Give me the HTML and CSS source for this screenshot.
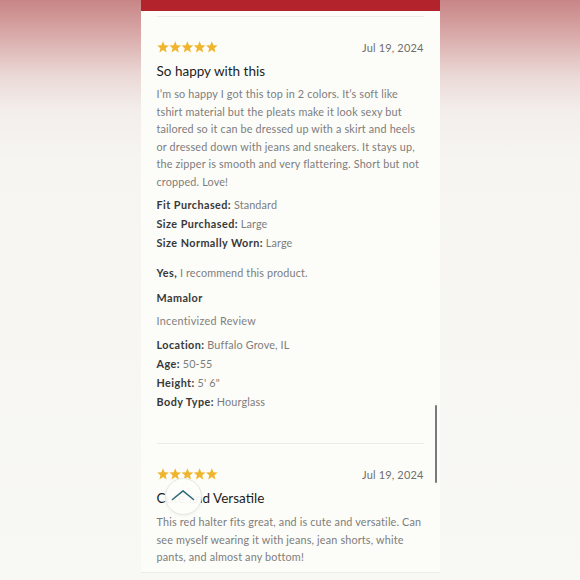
FILE: index.html
```html
<!DOCTYPE html>
<html lang="en">
<head>
<meta charset="utf-8">
<title>Reviews</title>
<link rel="stylesheet" href="styles.css">
</head>
<body>
<div class="stage">
  <div class="panel">
    <div class="topbar"></div>
    <div class="content">
      <div class="sep first"></div>

      <article class="review">
        <div class="review-head">
          <svg class="stars" width="61" height="12" viewBox="0 0 61 12" aria-label="5 stars">
            <g fill="#efb52e">
              <path id="s" d="M6 0.3 L7.6 4.2 L11.8 4.5 L8.6 7.2 L9.6 11.4 L6 9.1 L2.4 11.4 L3.4 7.2 L0.2 4.5 L4.4 4.2 Z"/>
              <use href="#s" x="12.2"/>
              <use href="#s" x="24.4"/>
              <use href="#s" x="36.6"/>
              <use href="#s" x="48.8"/>
            </g>
          </svg>
          <span class="date">Jul 19, 2024</span>
        </div>
        <h2 class="title">So happy with this</h2>
        <p class="body">I’m so happy I got this top in 2 colors. It’s soft like tshirt material but the pleats make it look sexy but tailored so it can be dressed up with a skirt and heels or dressed down with jeans and sneakers. It stays up, the zipper is smooth and very flattering. Short but not cropped. Love!</p>
        <ul class="attrs">
          <li><b>Fit Purchased:</b> <span>Standard</span></li>
          <li><b>Size Purchased:</b> <span>Large</span></li>
          <li><b>Size Normally Worn:</b> <span>Large</span></li>
        </ul>
        <p class="recommend"><b>Yes,</b> <span>I recommend this product.</span></p>
        <p class="author">Mamalor</p>
        <p class="badge">Incentivized Review</p>
        <ul class="attrs profile">
          <li><b>Location:</b> <span>Buffalo Grove, IL</span></li>
          <li><b>Age:</b> <span>50-55</span></li>
          <li><b>Height:</b> <span>5' 6"</span></li>
          <li><b>Body Type:</b> <span>Hourglass</span></li>
        </ul>
      </article>

      <div class="sep"></div>

      <article class="review">
        <div class="review-head">
          <svg class="stars" width="61" height="12" viewBox="0 0 61 12" aria-label="5 stars">
            <g fill="#efb52e">
              <path id="s2" d="M6 0.3 L7.6 4.2 L11.8 4.5 L8.6 7.2 L9.6 11.4 L6 9.1 L2.4 11.4 L3.4 7.2 L0.2 4.5 L4.4 4.2 Z"/>
              <use href="#s2" x="12.2"/>
              <use href="#s2" x="24.4"/>
              <use href="#s2" x="36.6"/>
              <use href="#s2" x="48.8"/>
            </g>
          </svg>
          <span class="date">Jul 19, 2024</span>
        </div>
        <h2 class="title">Cute and Versatile</h2>
        <p class="body">This red halter fits great, and is cute and versatile. Can see myself wearing it with jeans, jean shorts, white pants, and almost any bottom!</p>
      </article>
    </div>
    <div class="scrollbar"></div>
    <button class="totop" aria-label="Back to top">
      <svg width="24" height="12" viewBox="0 0 24 12"><path d="M1.5 10.5 L12 1.8 L22.5 10.5" fill="none" stroke="#2b6a78" stroke-width="1.5" stroke-linecap="round" stroke-linejoin="round"/></svg>
    </button>
  </div>
</div>
</body>
</html>
```

FILE: styles.css
```css
* { box-sizing: border-box; }
html, body { margin: 0; padding: 0; }
body {
  width: 580px;
  height: 580px;
  overflow: hidden;
  font-family: "Lato", "Liberation Sans", sans-serif;
  background: linear-gradient(to bottom, #c88586 0px, #d9aaa9 35px, #ead8d6 75px, #f3eeeb 110px, #f6f5f1 160px, #f8f8f4 580px);
}
.stage {
  display: flex;
  justify-content: center;
  height: 580px;
}
.panel {
  position: relative;
  width: 299px;
  height: 573px;
  background: #fcfcf8;
  border-bottom: 1px solid #ecebe6;
  overflow: hidden;
}
.topbar {
  height: 11px;
  background: #b3232c;
}
.content {
  padding: 0 16px;
}
.sep {
  height: 1px;
  background: #ecebe6;
  margin-top: 32px;
}
.sep.first { margin-top: 5px; }
.review { padding-top: 23px; }
.review-head {
  display: flex;
  justify-content: space-between;
  align-items: center;
  height: 14px;
}
.stars { display: block; }
.date {
  font-size: 11px;
  color: #6f6f6f;
  letter-spacing: 0.15px;
}
.title {
  margin: 7px 0 0;
  font-size: 13.5px;
  line-height: 20px;
  font-weight: 400;
  color: #1c1c1c;
  letter-spacing: 0;
}
.body {
  margin: 4px 0 0;
  font-size: 10.8px;
  line-height: 17.5px;
  color: #7d7d7d;
  letter-spacing: 0.17px;
}
.attrs {
  list-style: none;
  margin: 5px 0 0;
  padding: 0;
}
.attrs li {
  font-size: 10.8px;
  line-height: 19px;
}
.attrs b, .recommend b, .author {
  font-weight: 700;
  color: #383838;
  letter-spacing: 0.45px;
}
.attrs span, .recommend span {
  color: #7d7d7d;
  letter-spacing: 0.15px;
}
.recommend {
  margin: 11px 0 0;
  font-size: 10.8px;
  line-height: 19px;
}
.author {
  margin: 6px 0 0;
  font-size: 10.8px;
  line-height: 19px;
}
.badge {
  margin: 4px 0 0;
  font-size: 10.8px;
  line-height: 19px;
  color: #808080;
  letter-spacing: 0.3px;
}
.profile { margin-top: 5px; }
.review:last-child .body { margin-top: 5px; }
.scrollbar {
  position: absolute;
  left: 294px;
  top: 405px;
  width: 2px;
  height: 78px;
  background: #7a7a7a;
  border-radius: 1px;
}
.totop {
  position: absolute;
  left: 24px;
  top: 478px;
  width: 37px;
  height: 37px;
  border-radius: 50%;
  background: rgba(253, 253, 250, 0.96);
  border: 1px solid #e6e6e1;
  box-shadow: 0 1px 3px rgba(0,0,0,0.06);
  display: flex;
  align-items: center;
  justify-content: center;
  padding: 0 0 4px;
}
.totop svg { display: block; }
```
